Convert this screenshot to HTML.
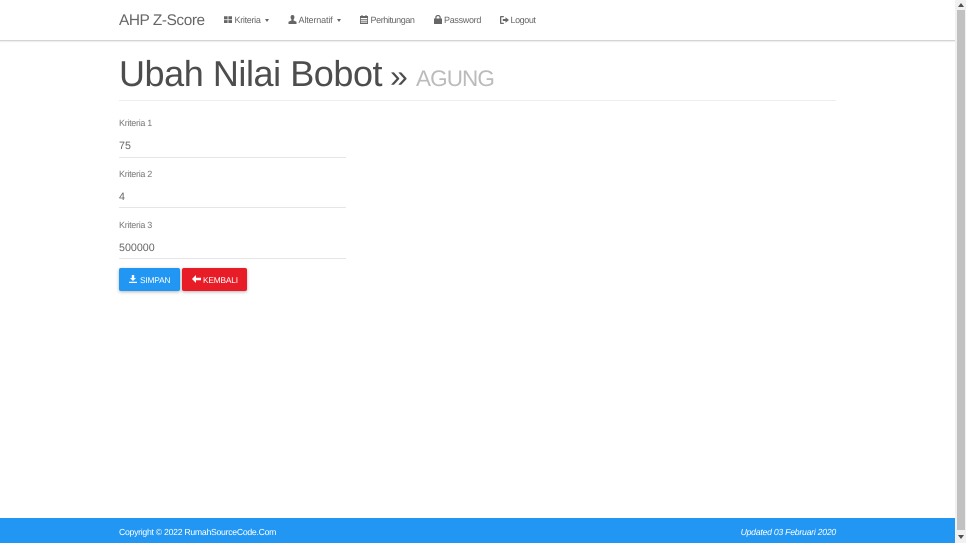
<!DOCTYPE html>
<html><head><meta charset="utf-8"><title>AHP Z-Score</title>
<style>
*{box-sizing:border-box}
html,body{margin:0;padding:0;width:966px;height:543px;overflow:hidden;background:#fff;font-family:"Liberation Sans",sans-serif}
body{text-rendering:geometricPrecision}
#w{position:absolute;left:0;top:0;width:966px;height:543px;filter:blur(.25px)}
.a{position:absolute;white-space:nowrap;line-height:1}
nav{position:absolute;left:0;top:0;width:955px;height:41px;background:#fff;border-bottom:1px solid #d4d4d4;box-shadow:0 1px 1px rgba(0,0,0,.08)}
nav .t{font-size:9px;color:#666;top:15.5px}
nav svg{position:absolute;fill:#666}
.caret{position:absolute;top:19px;width:0;height:0;border-left:2.5px solid transparent;border-right:2.5px solid transparent;border-top:3px solid #666}
.lbl{font-size:9px;color:#777;left:119px;letter-spacing:-.3px}
.val{font-size:10.7px;color:#666;left:119px}
.line{position:absolute;left:119px;width:227px;height:1px;background:#e6e6e6}
.btn{position:absolute;top:268px;height:23px;border-radius:2px;box-shadow:0 1px 3px rgba(0,0,0,.3)}
.btn span{position:absolute;top:7.5px;color:#fff;font-size:8.3px;line-height:1;white-space:nowrap;letter-spacing:-.15px}
.btn svg{position:absolute;fill:#fff}
footer{position:absolute;left:0;top:518px;width:955px;height:25px;background:#2196f3;color:#fff}
footer div{font-size:8.7px;top:9.5px}
#sb{position:absolute;left:955px;top:0;width:11px;height:543px;background:#f1f1f1}
#sb i{position:absolute;left:2px;top:10px;width:8px;height:520px;background:#c1c1c1}
</style></head><body><div id="w">
<nav>
<div class="a" style="left:119px;top:12.5px;font-size:15.4px;color:#666;letter-spacing:-.43px">AHP Z-Score</div>
<svg style="left:224px;top:15.5px" width="8" height="7.5" viewBox="0 0 8 7"><path d="M0 0h3.600v3.100H0zM4.400 0H8v3.100H4.400zM0 3.900h3.600V7H0zM4.400 3.900H8V7H4.400z"/></svg>
<div class="a t" style="left:234.5px;letter-spacing:-.31px">Kriteria</div><b class="caret" style="left:264.5px"></b>
<svg style="left:288px;top:15px" width="9" height="9" viewBox="0 0 9 9"><path d="M4.500 0C3.200 0 2.600.9 2.600 2.200c0 1 .4 1.800.9 2.400v.8L.5 6.800V9h8V6.800L5.500 5.400v-.8c.5-.6.9-1.400.9-2.400C6.400.9 5.800 0 4.500 0z"/></svg>
<div class="a t" style="left:298.5px;letter-spacing:-.15px">Alternatif</div><b class="caret" style="left:336.5px"></b>
<svg style="left:360px;top:15px" width="8" height="9" viewBox="0 0 8 9"><path d="M0 1h1.500V0h1v1h3V0h1v1H8v8H0zM.8 3v1h6.400V3zm0 1.800v1h6.400v-1zm0 1.800v1h6.400v-1z"/></svg>
<div class="a t" style="left:370.5px;letter-spacing:-.41px">Perhitungan</div>
<svg style="left:434px;top:15px" width="8" height="9" viewBox="0 0 8 9"><path d="M0 3.500h1.300V2.300C1.300.9 2.400 0 4 0s2.700.9 2.700 2.300v1.200H8V9H0zM2.500 3.500h3V2.400c0-.8-.6-1.300-1.500-1.300s-1.500.5-1.500 1.300z"/></svg>
<div class="a t" style="left:444px;letter-spacing:-.31px">Password</div>
<svg style="left:500px;top:16px" width="9" height="8" viewBox="0 0 9 8"><path d="M3.800 0v1.300H1.300v5.400h2.500V8H1C.4 8 0 7.600 0 7V1C0 .4.400 0 1 0zM5.500 1.300 9 4 5.500 6.700V5H2.800V3h2.700z"/></svg>
<div class="a t" style="left:510.5px;letter-spacing:-.42px">Logout</div>
</nav>

<h1 class="a" style="margin:0;left:119px;top:56px;font-size:36px;font-weight:400;color:#4d4d4d;letter-spacing:-.44px">Ubah Nilai Bobot</h1>
<div class="a" style="left:390px;top:60px;font-size:32px;color:#4d4d4d">»</div>
<div class="a" style="left:416px;top:68px;font-size:22.5px;color:#bbb;letter-spacing:-.9px">AGUNG</div>
<div class="line" style="top:100px;width:717px;background:#eee"></div>

<label class="a lbl" style="top:118.5px">Kriteria 1</label>
<div class="a val" style="top:140.5px">75</div>
<div class="line" style="top:157px"></div>
<label class="a lbl" style="top:169.5px">Kriteria 2</label>
<div class="a val" style="top:191.5px">4</div>
<div class="line" style="top:207px"></div>
<label class="a lbl" style="top:220.5px">Kriteria 3</label>
<div class="a val" style="top:242.5px">500000</div>
<div class="line" style="top:258px"></div>

<div class="btn" style="left:119px;width:61px;background:#2196f3">
<svg style="left:10px;top:7px" width="8" height="8" viewBox="0 0 8 8"><path d="M2.800 0h2.400v3h1.800L4 6 1 3h1.800zM0 6.700h8V8H0z"/></svg>
<span style="left:21px">SIMPAN</span></div>
<div class="btn" style="left:182px;width:65px;background:#e81c27">
<svg style="left:10px;top:7px" width="9" height="8" viewBox="0 0 9 8"><path d="M4 0v2.700h5v2.600H4V8L0 4z"/></svg>
<span style="left:21px">KEMBALI</span></div>

<footer>
<div class="a" style="left:119px;letter-spacing:-.28px">Copyright © 2022 RumahSourceCode.Com</div>
<div class="a" style="right:119px;font-style:italic;letter-spacing:-.25px">Updated 03 Februari 2020</div>
</footer>

<div id="sb"><i></i>
<svg style="position:absolute;left:2px;top:3px" width="8" height="4"><path d="M4 0 7 4H1z" fill="#505050"/></svg>
<svg style="position:absolute;left:2px;top:535px" width="8" height="4"><path d="M4 4 7 0H1z" fill="#505050"/></svg>
</div>
</div></body></html>
